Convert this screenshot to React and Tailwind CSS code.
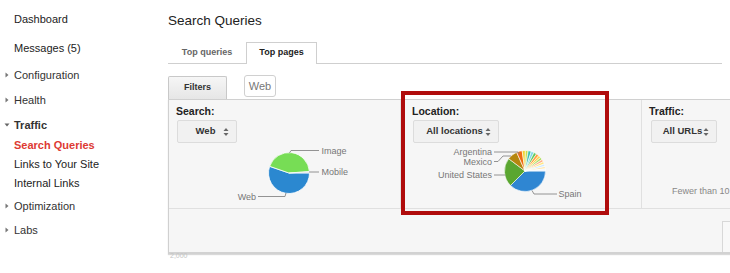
import React from "react";

function arc(cx, cy, r, a0, a1) {
  const rad = (a) => (a * Math.PI) / 180;
  const x0 = cx + r * Math.cos(rad(a0));
  const y0 = cy + r * Math.sin(rad(a0));
  const x1 = cx + r * Math.cos(rad(a1));
  const y1 = cy + r * Math.sin(rad(a1));
  const large = a1 - a0 > 180 ? 1 : 0;
  return `M${cx},${cy} L${x0.toFixed(2)},${y0.toFixed(2)} A${r},${r} 0 ${large} 1 ${x1.toFixed(2)},${y1.toFixed(2)} Z`;
}

function Tri({ down }) {
  return (
    <svg width="6" height="6" viewBox="0 0 6 6" className="shrink-0">
      {down ? <path d="M0.5 1.5 L5.5 1.5 L3 4.5 Z" fill="#666" /> : <path d="M1.5 0.5 L4.5 3 L1.5 5.5 Z" fill="#777" />}
    </svg>
  );
}

function NavItem({ children, tri, down, className = "", textClass = "text-[#333]" }) {
  return (
    <div className={`flex h-[14px] items-center ${className}`}>
      <div className="flex w-[14px] justify-start pl-[4px]">{tri && <Tri down={down} />}</div>
      <span className={`text-[11px] leading-[14px] ${textClass}`}>{children}</span>
    </div>
  );
}

function UpDown() {
  return (
    <svg width="6" height="10" viewBox="0 0 6 10" className="shrink-0">
      <path d="M0.5 4 L5.5 4 L3 1 Z" fill="#666" />
      <path d="M0.5 6 L5.5 6 L3 9 Z" fill="#666" />
    </svg>
  );
}

function Select({ label, w, className = "" }) {
  return (
    <div
      className={`flex h-[23px] items-center justify-between rounded-[2px] border border-[#dcdcdc] bg-[#f1f1f1] pl-[10px] pr-[7px] ${className}`}
      style={{ width: w }}
    >
      <span className="flex-1 text-center text-[9.5px] font-bold text-[#333]">{label}</span>
      <UpDown />
    </div>
  );
}

const locSlices = [
  [0, 135, "#2f86d2"],
  [135, 217, "#5aa630"],
  [217, 246, "#b5860e"],
  [246, 262, "#ee6c12"],
  [262, 271, "#f2d22e"],
  [271, 279, "#c8e04a"],
  [279, 288, "#3cbfae"],
  [288, 296, "#7fd8e8"],
  [296, 304, "#5fc95f"],
  [304, 312, "#ffa040"],
  [312, 319, "#ffd24d"],
  [319, 326, "#aee06b"],
  [326, 333, "#ffb08a"],
  [333, 340, "#ffe680"],
  [340, 347, "#cfe8ff"],
  [347, 354, "#ffe8b0"],
  [354, 360, "#eef6ff"],
];

export default function App() {
  return (
    <div className="relative flex h-[273px] w-[730px] overflow-hidden bg-white font-['Liberation_Sans',Arial,sans-serif]">
      {/* Sidebar */}
      <div className="w-[168px] shrink-0 pt-[12px]">
        <NavItem textClass="text-[#222]">Dashboard</NavItem>
        <NavItem className="mt-[15px]" textClass="text-[#222]">Messages (5)</NavItem>
        <NavItem className="mt-[13px]" tri>Configuration</NavItem>
        <NavItem className="mt-[11px]" tri>Health</NavItem>
        <NavItem className="mt-[11px]" tri down textClass="font-bold text-[#333]">Traffic</NavItem>
        <NavItem className="mt-[6px]" textClass="font-bold text-[#dd3a33]">Search Queries</NavItem>
        <NavItem className="mt-[5px]" textClass="text-[#222]">Links to Your Site</NavItem>
        <NavItem className="mt-[5px]" textClass="text-[#222]">Internal Links</NavItem>
        <NavItem className="mt-[9px]" tri>Optimization</NavItem>
        <NavItem className="mt-[10px]" tri>Labs</NavItem>
      </div>

      {/* Main */}
      <div className="min-w-0 flex-1 pr-[8px]">
        <div className="mt-[12px] h-[17px] text-[13.5px] leading-[17px] text-[#222]">Search Queries</div>

        <div className="mt-[13px] flex h-[22px] items-end border-b border-[#cfcfcf]">
          <div className="flex h-[21px] w-[78px] items-center justify-center text-[9px] font-bold text-[#666]">Top queries</div>
          <div className="-mb-px flex h-[22px] w-[71px] items-center justify-center border border-b-0 border-[#cfcfcf] bg-white pb-px text-[9px] font-bold text-[#222]">
            Top pages
          </div>
        </div>

        <div className="mt-[12px] flex items-start">
          <div className="flex h-[23px] w-[59px] items-center justify-center rounded-t-[2px] border border-b-0 border-[#c8c8c8] bg-gradient-to-b from-[#f6f6f6] to-[#e6e6e6] text-[9px] font-bold text-[#333]">
            Filters
          </div>
          <div className="ml-[17px] -mt-px flex h-[22px] w-[32px] items-center justify-center rounded-[3px] border border-[#d0d0d0] bg-white text-[11px] text-[#777]">
            Web
          </div>
        </div>

        {/* Panel */}
        <div className="w-[570px] border-l border-t border-[#d0d0d0] bg-[#f6f6f6] shadow-[0_1px_1px_rgba(0,0,0,0.15)]">
          <div className="flex h-[109px] border-b border-[#e0e0e0]">
            {/* Search column */}
            <div className="w-[232px] shrink-0 border-r border-[#e3e3e3] pl-[7px] pt-[5px]">
              <div className="h-[13px] text-[10.5px] font-bold leading-[13px] text-[#222]">Search:</div>
              <Select label="Web" w={60} className="ml-px mt-[2px]" />
              <svg width="225" height="62" viewBox="7 0 225 62" className="mt-[3px] block">
                <path d={arc(120, 27, 20.5, 0, 199)} fill="#2b88d0" stroke="#fff" strokeWidth="0.8" />
                <path d={arc(120, 27, 20.5, 199, 356)} fill="#77dd55" stroke="#fff" strokeWidth="0.8" />
                <path d={arc(120, 27, 20.5, 356, 360)} fill="#e4e4e4" stroke="#fff" strokeWidth="0.5" />
                <polyline points="120.5,7 122,4.5 150,4.5" fill="none" stroke="#888" strokeWidth="0.9" />
                <polyline points="140,26 150,26" fill="none" stroke="#888" strokeWidth="0.9" />
                <polyline points="117,47 116,50.5 89,50.5" fill="none" stroke="#888" strokeWidth="0.9" />
                <text x="152.5" y="8" fontSize="9" fill="#777" fontFamily="Liberation Sans, Arial, sans-serif">Image</text>
                <text x="152.5" y="29.3" fontSize="9" fill="#777" fontFamily="Liberation Sans, Arial, sans-serif">Mobile</text>
                <text x="87" y="54" fontSize="9" fill="#777" textAnchor="end" fontFamily="Liberation Sans, Arial, sans-serif">Web</text>
              </svg>
            </div>

            {/* Location column */}
            <div className="w-[241px] shrink-0 border-r border-[#e0e0e0] pl-[11px] pt-[5px]">
              <div className="h-[13px] text-[10.5px] font-bold leading-[13px] text-[#222]">Location:</div>
              <Select label="All locations" w={86} className="ml-px mt-[2px]" />
              <svg width="230" height="62" viewBox="11 0 230 62" className="mt-[3px] block">
                {locSlices.map(([a0, a1, c], i) => (
                  <path key={i} d={arc(124, 25, 20.5, a0, a1)} fill={c} stroke="#fff" strokeWidth="0.6" />
                ))}
                <polyline points="93,6 117,6 118.5,8" fill="none" stroke="#888" strokeWidth="0.9" />
                <polyline points="93,15.5 97,15.5 102,10 110,10" fill="none" stroke="#888" strokeWidth="0.9" />
                <polyline points="93,29 104.5,29" fill="none" stroke="#888" strokeWidth="0.9" />
                <polyline points="131,44.5 133,48 156,48" fill="none" stroke="#888" strokeWidth="0.9" />
                <text x="91" y="9.2" fontSize="9" fill="#777" textAnchor="end" fontFamily="Liberation Sans, Arial, sans-serif">Argentina</text>
                <text x="91" y="19.2" fontSize="9" fill="#777" textAnchor="end" fontFamily="Liberation Sans, Arial, sans-serif">Mexico</text>
                <text x="91" y="32.2" fontSize="9" fill="#777" textAnchor="end" fontFamily="Liberation Sans, Arial, sans-serif">United States</text>
                <text x="157.5" y="51.2" fontSize="9" fill="#777" fontFamily="Liberation Sans, Arial, sans-serif">Spain</text>
              </svg>
            </div>

            {/* Traffic column */}
            <div className="flex-1 pl-[7px] pt-[5px]">
              <div className="h-[13px] text-[10.5px] font-bold leading-[13px] text-[#222]">Traffic:</div>
              <Select label="All URLs" w={66} className="ml-[2px] mt-[2px]" />
              <div className="ml-[23px] mt-[43px] whitespace-nowrap text-[9px] leading-[11px] text-[#888]">Fewer than 10</div>
            </div>
          </div>

          <div className="flex h-[45px] border-b-2 border-[#d2d2d2] pl-[553px] pt-[12px]">
            <div className="h-full w-[20px] border-l border-t border-[#d8d8d8] bg-[#f8f8f8]" />
          </div>
        </div>
        <div className="ml-[2px] -mt-[2px] text-[7px] leading-[8px] text-[#c4c4c4]">2,000</div>
      </div>

      {/* Red highlight box */}
      <div className="pointer-events-none absolute left-[401px] top-[91px] h-[124px] w-[208px] border-[4px] border-[#b00c0c]" />
    </div>
  );
}
